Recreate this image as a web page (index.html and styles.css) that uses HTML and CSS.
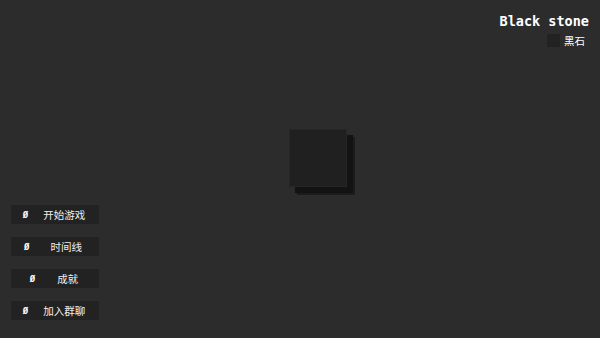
FILE: index.html
```html
<!DOCTYPE html>
<html lang="zh">
<head>
<meta charset="utf-8">
<link rel="stylesheet" href="styles.css">
</head>
<body>
<div class="screen">
  <header class="hud">
    <div class="title">Black stone</div>
    <div class="legend"><span class="swatch"></span><span class="legend-label">黑石</span></div>
  </header>
  <main class="stage">
    <div class="stone"></div>
  </main>
  <nav class="menu">
    <div class="btn btn-a"><span class="mark">Ø</span><span class="label">开始游戏</span></div>
    <div class="btn btn-b"><span class="mark">Ø</span><span class="label">时间线</span></div>
    <div class="btn btn-c"><span class="mark">Ø</span><span class="label">成就</span></div>
    <div class="btn btn-a"><span class="mark">Ø</span><span class="label">加入群聊</span></div>
  </nav>
</div>
</body>
</html>
```
FILE: styles.css
```css
html, body {
  margin: 0;
  padding: 0;
  background: #2c2c2c;
}
.screen {
  width: 600px;
  height: 338px;
  overflow: hidden;
  display: flex;
  flex-direction: column;
  font-family: "Noto Sans CJK SC", "Noto Sans", sans-serif;
  color: #f2f2f2;
}
.hud {
  display: flex;
  flex-direction: column;
  align-items: flex-end;
  padding: 12px 11px 0 0;
  height: 39px;
}
.title {
  font-family: "DejaVu Sans Mono", monospace;
  font-weight: bold;
  font-size: 13.5px;
  line-height: 18px;
  color: #ffffff;
}
.legend {
  display: flex;
  align-items: center;
  gap: 4px;
  margin: 4px 4px 0 0;
}
.swatch {
  width: 13px;
  height: 13px;
  background: #222222;
}
.legend-label {
  font-size: 10.5px;
  line-height: 13px;
  color: #ffffff;
}
.stage {
  height: 154px;
  padding: 78px 0 0 289px;
  box-sizing: border-box;
}
.stone {
  width: 58px;
  height: 58px;
  background: #202020;
  box-sizing: border-box;
  border: 1px solid #262626;
  box-shadow: 6px 6px 0 #131313, 8px 8px 0 #1c1c1c;
}
.menu {
  display: flex;
  flex-direction: column;
  gap: 13px;
  margin-left: 11px;
  width: 88px;
}
.btn {
  height: 19px;
  background: #222222;
  display: flex;
  align-items: center;
  justify-content: center;
}
.mark {
  font-family: "DejaVu Sans Mono", monospace;
  font-weight: bold;
  font-size: 9px;
  line-height: 10px;
  color: #ffffff;
}
.label {
  font-size: 10.5px;
  line-height: 19px;
  color: #f0f0f0;
}
.btn-a { gap: 15px; padding-right: 2px; }
.btn-b { gap: 21px; padding-right: 4px; }
.btn-c { gap: 22px; padding-right: 2px; }
```
